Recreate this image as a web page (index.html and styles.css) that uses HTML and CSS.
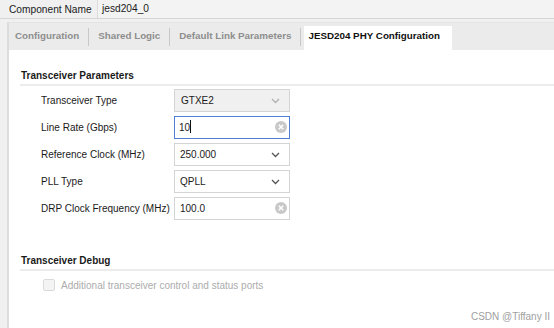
FILE: index.html
```html
<!DOCTYPE HTML>
<html>

<head>
    <meta charset="UTF-8">
    <title>JESD204 PHY</title>
    <link rel="stylesheet" href="styles.css">
</head>

<body>
    <div class="top">
        <span class="top-label">Component Name</span>
        <div class="top-field">jesd204_0</div>
    </div>

    <div class="panel">
        <div class="tabs">
            <span class="tab">Configuration</span>
            <span class="sep"></span>
            <span class="tab">Shared Logic</span>
            <span class="sep"></span>
            <span class="tab">Default Link Parameters</span>
            <span class="sep"></span>
            <span class="tab active">JESD204 PHY Configuration</span>
        </div>

        <div class="content">
            <div class="group-title">Transceiver Parameters</div>
            <div class="rows">
                <div class="row">
                    <span class="label">Transceiver Type</span>
                    <div class="field disabled">GTXE2
                        <svg class="chev" width="9" height="6" viewBox="0 0 9 6"><path d="M1 1l3.5 3.5L8 1" fill="none" stroke="#b0b0b0" stroke-width="1.3"/></svg>
                    </div>
                </div>
                <div class="row">
                    <span class="label">Line Rate (Gbps)</span>
                    <div class="field focus">10<span class="caret"></span>
                        <svg class="clear" width="12" height="12" viewBox="0 0 12 12"><circle cx="6" cy="6" r="6" fill="#c8c8c8"/><path d="M3.8 3.8l4.4 4.4M8.2 3.8l-4.4 4.4" stroke="#fff" stroke-width="1.5"/></svg>
                    </div>
                </div>
                <div class="row">
                    <span class="label">Reference Clock (MHz)</span>
                    <div class="field">250.000
                        <svg class="chev" width="9" height="6" viewBox="0 0 9 6"><path d="M1 1l3.5 3.5L8 1" fill="none" stroke="#555" stroke-width="1.3"/></svg>
                    </div>
                </div>
                <div class="row">
                    <span class="label">PLL Type</span>
                    <div class="field">QPLL
                        <svg class="chev" width="9" height="6" viewBox="0 0 9 6"><path d="M1 1l3.5 3.5L8 1" fill="none" stroke="#555" stroke-width="1.3"/></svg>
                    </div>
                </div>
                <div class="row">
                    <span class="label">DRP Clock Frequency (MHz)</span>
                    <div class="field">100.0
                        <svg class="clear" width="12" height="12" viewBox="0 0 12 12"><circle cx="6" cy="6" r="6" fill="#c8c8c8"/><path d="M3.8 3.8l4.4 4.4M8.2 3.8l-4.4 4.4" stroke="#fff" stroke-width="1.5"/></svg>
                    </div>
                </div>
            </div>

            <div class="group-title debug">Transceiver Debug</div>
            <div class="check-row">
                <span class="checkbox"></span>
                <span class="check-label">Additional transceiver control and status ports</span>
            </div>
        </div>
    </div>

    <div class="mark">CSDN @Tiffany II</div>
</body>

</html>
```

FILE: styles.css
```css
body {
    margin: 0;
    height: 328px;
    overflow: hidden;
    background-color: #f0f0f0;
    font-family: "Liberation Sans", Arial, sans-serif;
    font-size: 10px;
    color: #1a1a1a;
    position: relative;
}

.top {
    display: flex;
    align-items: center;
    height: 18px;
    border-bottom: 1px solid #d6d6d6;
}

.top-label {
    width: 88px;
    padding-left: 9px;
    font-size: 10.2px;
}

.top-field {
    flex: 1;
    height: 18px;
    line-height: 18px;
    padding-left: 4px;
    border-left: 1px solid #dcdcdc;
    background-color: #f3f3f3;
    font-size: 10.2px;
}

.panel {
    margin-top: 3px;
    margin-left: 7px;
    border-left: 2px solid #dcdcdc;
    border-top: 1px solid #e4e4e4;
    background-color: #fff;
    height: 320px;
}

.tabs {
    display: flex;
    align-items: flex-end;
    height: 27px;
    background-color: #ebebeb;
}

.tab {
    height: 24px;
    line-height: 20px;
    padding: 0 6px;
    font-weight: bold;
    font-size: 9.8px;
    color: #8e8e8e;
    white-space: nowrap;
}

.sep {
    width: 1px;
    height: 18px;
    margin: 0 3px 4px 3px;
    background-color: #c8c8c8;
}

.tab.active {
    background-color: #fff;
    color: #111;
    width: 138px;
    padding-left: 4px;
    margin-left: 0;
}

.content {
    padding: 20px 0 0 11px;
}

.group-title {
    font-weight: bold;
    padding: 0 0 3px 1px;
    border-bottom: 2px solid #ececec;
}

.rows {
    display: flex;
    flex-direction: column;
    gap: 4px;
    padding: 3px 0 0 21px;
}

.row {
    display: flex;
    align-items: center;
    height: 23px;
}

.label {
    width: 133px;
}

.field {
    position: relative;
    box-sizing: border-box;
    width: 116px;
    height: 23px;
    line-height: 21px;
    padding-left: 5px;
    border: 1px solid #d4d4d4;
    background-color: #fff;
}

.field.disabled {
    background-color: #f0f0f0;
    padding-left: 6px;
}

.field.focus {
    border-color: #4d7fd6;
    padding-left: 4px;
}

.caret {
    display: inline-block;
    width: 1px;
    height: 13px;
    vertical-align: -2px;
    background-color: #111;
}

.chev {
    position: absolute;
    right: 9px;
    top: 8px;
}

.clear {
    position: absolute;
    right: 2px;
    top: 4px;
}

.debug {
    margin-top: 35px;
}

.check-row {
    display: flex;
    align-items: center;
    gap: 6px;
    padding: 8px 0 0 23px;
}

.checkbox {
    box-sizing: border-box;
    width: 12px;
    height: 12px;
    border: 1px solid #dadada;
    border-radius: 2px;
    background-color: #f4f4f4;
}

.check-label {
    color: #acacac;
}

.mark {
    position: absolute;
    right: 4px;
    bottom: 6px;
    color: #a0a0a0;
    font-size: 10px;
}
```
